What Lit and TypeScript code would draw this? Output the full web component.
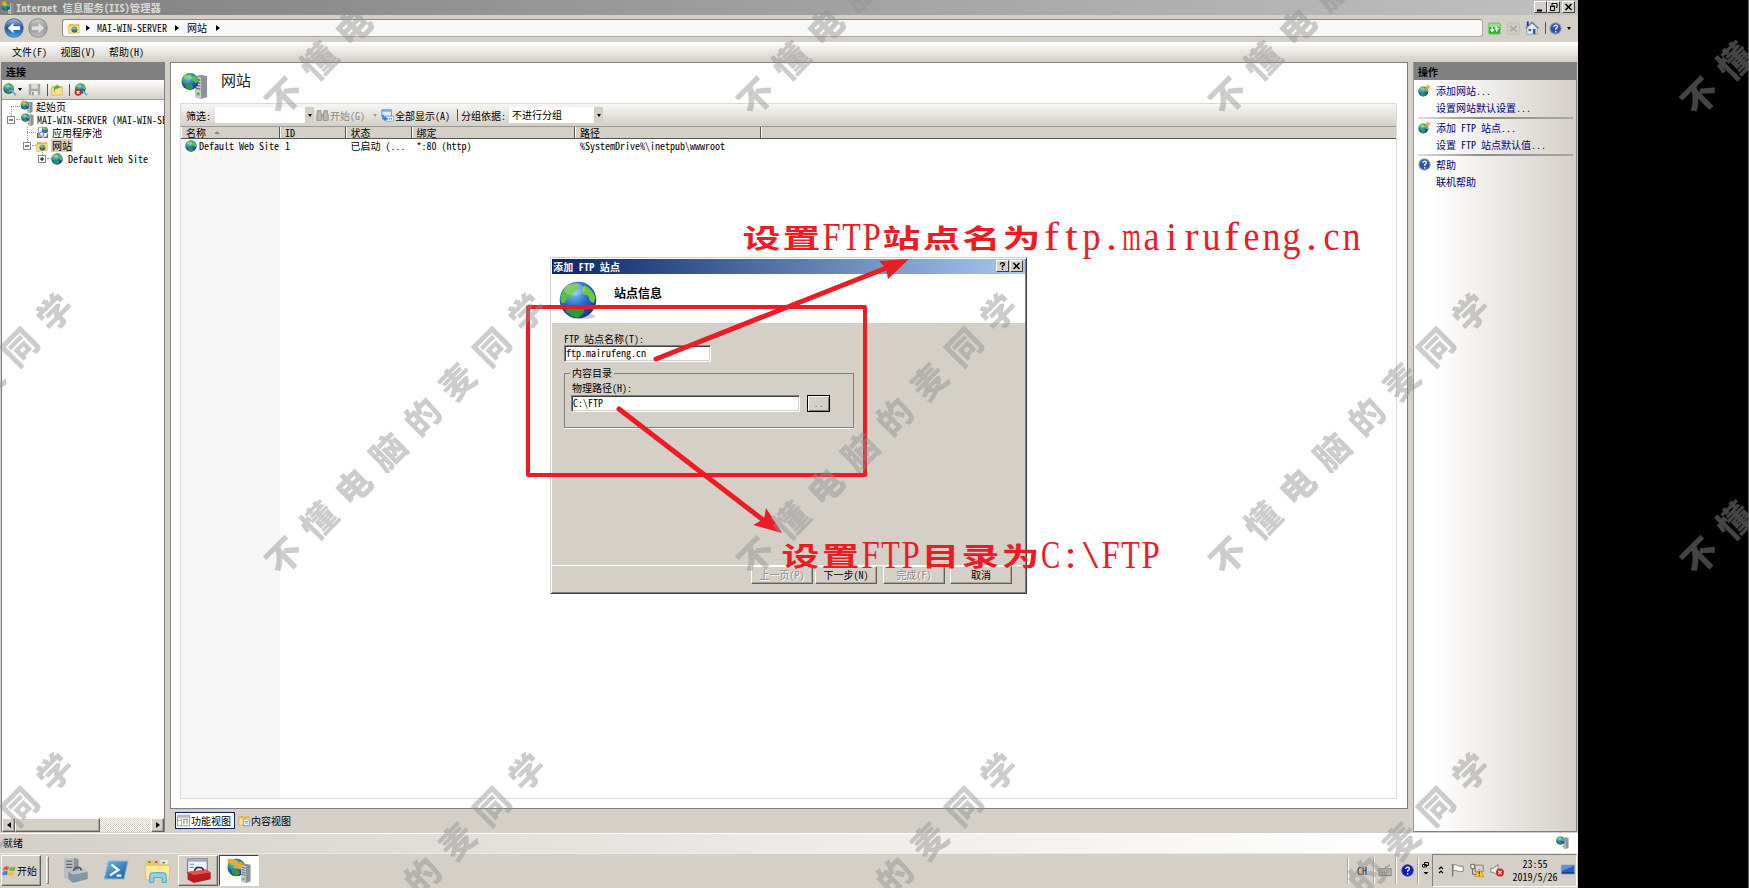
import { LitElement, html, svg, css } from "lit";
import { customElement, property } from "lit/decorators.js";

const globe = (x = 0, y = 0, s = 1) => svg`
  <g transform="translate(${x} ${y}) scale(${s})">
    <circle cx="8" cy="8" r="7.6" fill="url(#sea)"/>
    <path d="M2.2 3.4Q5 .2 8.6.8L9.4 2.4 7.4 3.4 7 5.4 4.6 6.6 4 9 1.6 8.4Q.8 5.4 2.2 3.4Z" fill="#3fb33a"/>
    <path d="M10.4 2.6 13 3Q15.4 5.6 15.2 8.6L13 9.6 11.6 7.4 9.4 6.8 9 4.4Z" fill="#58c23e"/>
    <path d="M4.4 10.4 7.4 9.6 10.4 11.2 11 13.4 8.6 15.4Q5.4 15 4.2 13Z" fill="#2f9a34"/>
    <ellipse cx="6" cy="4" rx="3.6" ry="2.2" fill="#fff" opacity=".35"/>
  </g>`;

/* Large globe of the wizard banner: mostly ocean, with lit land masses and a soft ground shadow. */
const earth = svg`
  <ellipse cx="9.6" cy="14.8" rx="5.6" ry="1.2" fill="#000" opacity=".2"/>
  <circle cx="8" cy="8" r="7.7" fill="url(#sea)"/>
  <path d="M1.4 4.6Q3.4 1.2 7 .6L9 1.4 7.6 2.4 8 3.6 6.4 4.4 5.4 6.2 3.6 7 2.6 9 1.2 9.4Q0 7 1.4 4.6Z" fill="#5fbf3c"/>
  <path d="M10.6 1.8Q14.4 3.4 15.3 7L14.6 9.4 13 8.4 12.2 6 10.4 5.6 9.8 3.6Z" fill="#6cc743"/>
  <path d="M3.4 11 5.6 10.2 8.4 10.4 10.6 12 10 14 8 15.5Q4.8 15 3 12.8Z" fill="#2f9a34"/>
  <ellipse cx="6.6" cy="3.6" rx="4.4" ry="2.6" fill="#fff" opacity=".22"/>`;

const tower = (x = 0, y = 0, s = 1) => svg`
  <g transform="translate(${x} ${y}) scale(${s})">
    <path d="M0 1 4 0 8 1V15L4 16.4 0 15Z" fill="#8d9296"/>
    <path d="M0 1 4 2V16.4L0 15Z" fill="#c9cdd0"/>
    <path d="M.5 3 3.5 3.8M.5 5 3.5 5.8M.5 7 3.5 7.8M.5 9 3.5 9.8" stroke="#5c6165" stroke-width=".8"/>
    <rect x="1" y="12" width="2" height="2" fill="#4fc13c"/>
  </g>`;

const spark = (x: number, y: number) => svg`
  <path transform="translate(${x} ${y})" d="M0-4 1-1.4 3.6-2.6 1.8 0 4 1.4 1 1.4.4 4-1 1.4-4 1.6-1.8-.2-3-2.8-.8-1.4Z" fill="#f6a723"/>`;

const folder = svg`
  <path d="M1 3.4 6 2 7.4 3.4 14.6 2.6V14.4L1 15Z" fill="#e3b54a"/>
  <path d="M1 5.4 15 4.4V14.4L1 15.2Z" fill="#fbe08a" stroke="#c8973a" stroke-width=".6"/>`;

const question = (fill: string, ring: string) => svg`
  <circle cx="8" cy="8" r="7.6" fill="${ring}"/><circle cx="8" cy="8" r="6.2" fill="${fill}"/>
  <path d="M5.8 6.2Q6 3.8 8.2 3.8 10.4 4 10.2 6 10 7.2 8.2 8.2V9.6M8.2 11V12.8" fill="none" stroke="#fff" stroke-width="1.7"/>`;

const glyphs: Record<string, unknown> = {
  globe: globe(),
  earth,
  globeTool: svg`${globe(0, 0, 0.85)}<path d="M8 10Q11 8 12 11L16 15" stroke="#7ba8cf" stroke-width="2.4" fill="none"/>`,
  globeStop: svg`${globe(1, 0, 0.85)}<path d="M11 10 16 15" stroke="#7ba8cf" stroke-width="2.4"/>
    <circle cx="5" cy="11.5" r="4.3" fill="#c8201c"/><path d="M3.2 9.7 6.8 13.3M6.8 9.7 3.2 13.3" stroke="#fff" stroke-width="1.4"/>`,
  globeNew: svg`${globe(0, 2.6, 0.82)}${spark(12, 4)}`,
  site: svg`${folder}${globe(4.4, 6, 0.52)}`,
  server: svg`${tower(8.4, 1.6, 0.88)}${globe(0, 0.4, 0.66)}`,
  start: svg`${tower(8.6, 2, 0.86)}${globe(0.6, 1.4, 0.66)}${spark(4, 3)}`,
  pool: svg`<path d="M3 1.5H11L14 4V14H3Z" fill="#eef4fb" stroke="#7f9cbd"/>${globe(7, 1, 0.48)}
    <path d="M2 8.5V14H7" stroke="#cc3b2c" stroke-width="1.6" fill="none"/><path d="M10 14H14V10" stroke="#cc3b2c" stroke-width="1.6" fill="none"/><circle cx="7" cy="10" r="2.8" fill="#dfe8f3" stroke="#3f74ad"/>`,
  back: svg`<circle cx="8" cy="8" r="7.8" fill="#5a6f92"/><circle cx="8" cy="8" r="7" fill="url(#nav)"/>
    <path d="M3 8 7.6 3.8V6.5H13V9.5H7.6V12.2Z" fill="#fff"/>`,
  forward: svg`<circle cx="8" cy="8" r="7.8" fill="#8e8e8e"/><circle cx="8" cy="8" r="7" fill="url(#dim)"/>
    <path d="M13 8 8.4 3.8V6.5H3V9.5H8.4V12.2Z" fill="#dedede"/>`,
  save: svg`<path d="M1 1H15V15H1Z" fill="#a9a9a9"/><path d="M4 1H12V7H4Z" fill="#dcdcdc"/><path d="M4 10H12V15H4Z" fill="#e8e8e8"/><path d="M5 11H7V15H5Z" fill="#8f8f8f"/>`,
  up: svg`${folder}<path d="M5 13V8.5Q5 6 8 5.6L7.6 7.4 12 3.6 7.2.4 7.6 2.6Q3.6 3.6 4 8Z" fill="#43ad34"/>`,
  refresh: svg`<rect x=".5" y="1" width="15" height="14" rx="2" fill="#2fb52d" stroke="#8bcf86"/><rect x="1" y="1.5" width="14" height="5" rx="2" fill="#8ade84"/>
    <path d="M5.2 11.4V5.4M3 9 5.2 11.6 7.4 9M10.8 12V8Q10.8 5.6 8.6 5.4M8.6 9 10.8 7.4 13.2 9" fill="none" stroke="#fff" stroke-width="1.5"/>`,
  stop: svg`<rect x=".5" y="1" width="15" height="14" rx="2" fill="#cfccc5" stroke="#bdb9b1"/><path d="M4 5 12 11.4M12 5 4 11.4" stroke="#aaa7a1" stroke-width="2"/>`,
  home: svg`<path d="M2 7.6V15H14V7.6L8 2.4Z" fill="#e9eef7" stroke="#6f83ad" stroke-width=".8"/><path d="M.6 8.4 8 1.6 15.4 8.4" fill="none" stroke="#7389b8" stroke-width="1.8"/>
    <path d="M2 .6H4.2V5L2 6.4Z" fill="#2233c0"/><path d="M9 9H12V15H9Z" fill="#3e5ca5"/><path d="M4 9H7V11.6H4Z" fill="#555f78"/>`,
  help: question("#2752b8", "#9a9a9a"),
  trayHelp: question("#1418c4", "#2c3a8c"),
  find: svg`<path d="M2 2H6V6L7 7V14H1V7ZM10 2H14V6L15 7V14H9V7Z" fill="#b9b7b2" stroke="#8c8a86"/><path d="M6 6H10V10H6Z" fill="#9c9a96"/>`,
  showAll: svg`<path d="M1 1H13V9H1Z" fill="#dfeaf8" stroke="#5d85b9"/><path d="M1 1H13V3.4H1Z" fill="#86a8d6"/>
    <path d="M6 9H15.4V15H6Z" fill="#fff" stroke="#7d9cc6"/><path d="M7.4 12H14" stroke="#4b75b5" stroke-width="2" stroke-dasharray="1.4 1"/><path d="M2.4 7V12H6M4.4 9.8 6.6 12 4.4 14.2" fill="none" stroke="#1f7cd0" stroke-width="1.8"/>`,
  features: svg`<path d="M.5 1.5H15.5V14.5H.5Z" fill="#f4f4f4" stroke="#8d8d8d"/><path d="M1 2H15V4.6H1Z" fill="#b4bac2"/>
    <path d="M5.5 5V14M1 8H5" stroke="#a8a8a8"/><path d="M7.4 6.6H13.6M7.4 8.8H9.6M11.4 8.8H13.6M7.4 11H9.6M11.4 11H13.6" stroke="#7d858e" stroke-width="1.2"/>`,
  content: svg`${folder}<path d="M7.5 6.5H12.5L15 9V15.5H7.5Z" fill="#fff" stroke="#5d85b9"/><path d="M9 10H13.5M9 12H13.5" stroke="#5d85b9"/>`,
  flagWin: svg`<path d="M1 4Q4 2 7.4 3.4L6.4 7.8Q3.4 6.6.2 8.2Z" fill="#e8542b"/><path d="M8.6 3.8Q11.6 5.2 15.4 3.4L14.2 8Q11 9.2 7.6 8Z" fill="#74b62e"/>
    <path d="M0 9.4Q3 8 6 9.2L5 13.6Q2.4 12.4-.8 14Z" fill="#3b7fd6"/><path d="M7.2 9.4Q10.4 10.8 13.8 9.2L12.6 13.8Q9.4 15 6.2 13.8Z" fill="#f4bf1f"/>`,
  manager: svg`<path d="M1 0H8L10 1V13H1Z" fill="#8c9499"/><path d="M1 0H7V13H1Z" fill="#b9c0c4"/><path d="M2 2H6M2 4H6M2 6H6" stroke="#5d666b" stroke-width=".8"/>
    <path d="M3.4 8.6 13.4 7.4 15.8 9V13.4L6.4 16 3.4 13.6Z" fill="#8496a2"/><path d="M3.4 8.6 13.4 7.4 15.8 9 6.4 10.6Z" fill="#b7c5ce"/><path d="M6.6 8.4Q7.4 5.8 9.4 6 11.6 6 11.8 8" fill="none" stroke="#4b565d"/>`,
  shell: svg`<path d="M3 2H16L13.4 14H.2Z" fill="url(#ps)" stroke="#8db9d8" stroke-width=".7"/><path d="M5 4.4 9.6 8 4 11.6M8.4 11.8H11.6" fill="none" stroke="#fff" stroke-width="1.5"/>`,
  explorer: svg`<path d="M1 1.6H6L7 3H15V14H1Z" fill="#e9c765"/><path d="M10 1.4H14.6V4H10Z" fill="#fff0b8"/><path d="M2 2.6H3.6" stroke="#2ea04a"/><path d="M6.4 2.6H8" stroke="#c8312c"/><path d="M11 3H13" stroke="#2b8fd8"/>
    <path d="M0 4.6H16L15.4 14H.6Z" fill="#fbe9a0" stroke="#e0bd58" stroke-width=".5"/><path d="M3 15.6V11Q3 9.4 4.6 9.4H12Q13.6 9.4 13.6 11V15.6H11V12.6H5.6V15.6Z" fill="#8fd0ee" stroke="#4a9cc8" stroke-width=".6"/>`,
  toolbox: svg`<path d="M1 .6H13.6V10H1Z" fill="#f3f5f8" stroke="#7b8593" stroke-width=".8"/><path d="M1 .6H13.6V2.4H1Z" fill="#9fb0c6"/><path d="M2.4 4H5M2.4 6H5" stroke="#7b8593" stroke-width=".7"/>
    <path d="M1 9 12.8 7.4 15.8 9.2V13.6L5 16 1 13.8Z" fill="#b81d1d"/><path d="M1 9 12.8 7.4 15.8 9.2 5 10.8Z" fill="#e9554e"/><path d="M5.4 8.4Q6 5.8 8.4 6 10.8 6 11.2 8" fill="none" stroke="#333"/>`,
  iis: svg`${globe(0, 0, 0.75)}${tower(9, 3.6, 0.76)}<path d="M.4.6Q5-.4 7.4 3.6L9.4 2.4 8.8 7.4 4 6 5.8 4.8Q4 2.4.4 3.4Z" fill="#f3aa1e"/>`,
  keyboard: svg`<path d="M1 6.5H15V14.5H1Z" fill="#bbb8b0" stroke="#7f7c76"/><path d="M3 9H13M3 11H13M5 13H11" stroke="#6f6c67" stroke-dasharray="1.2 .8"/><path d="M8 6Q8 3.6 11 4 13 4 13 1.6" fill="none" stroke="#7f7c76"/>`,
  flag: svg`<path d="M3 1V15.4" stroke="#777" stroke-width="1.6"/><path d="M3.6 2.4Q6 1 8.4 2.8 11 4.4 15 3.6V9.6Q11 10.6 8.4 9 6 7.6 3.6 9Z" fill="#fff" stroke="#777"/>`,
  network: svg`<path d="M1 1.5H5V6.5H1Z" fill="#f1f1f1" stroke="#555"/><path d="M6 2.5H15V10H6Z" fill="#d8d8d8" stroke="#777"/><path d="M3 7V13H9" stroke="#555" fill="none"/><path d="M10.6 6.6 16 15.6H5.2Z" fill="#f8cf1e" stroke="#a98408" stroke-width=".6"/><path d="M10.6 9.4V12.6M10.6 13.4V14.6" stroke="#222" stroke-width="1.3"/>`,
  sound: svg`<path d="M1 6H4L9 1.6V14.4L4 10.6H1Z" fill="#ececec" stroke="#777"/><circle cx="11.4" cy="10.8" r="4.6" fill="#e2271f"/><path d="M9.6 9 13.2 12.6M13.2 9 9.6 12.6" stroke="#fff" stroke-width="1.4"/>`,
  desktop: svg`<path d="M.5 2.5H15.5V12.5H.5Z" fill="#2b62bb" stroke="#7c9ed6"/><path d="M1 3H15L1 9Z" fill="#5d93de"/><path d="M1 11.2H15" stroke="#173a78" stroke-width="1.6"/>`,
};

@customElement("ui-icon")
export class UiIcon extends LitElement {
  @property() name = "globe";
  @property({ type: Number }) size = 13;
  static styles = css`
    :host { display: block; flex: none; line-height: 0; }
    svg { display: block; overflow: visible; }
  `;
  render() {
    return html`<svg width=${this.size} height=${this.size} viewBox="0 0 16 16">
      <defs>
        <radialGradient id="sea" cx=".4" cy=".3" r=".8"><stop offset="0" stop-color="#7cc3f5"/><stop offset=".5" stop-color="#2467c4"/><stop offset="1" stop-color="#0c2c74"/></radialGradient>
        <linearGradient id="nav" x2="0" y2="1"><stop offset="0" stop-color="#9dbbe6"/><stop offset=".5" stop-color="#1d4a9c"/><stop offset="1" stop-color="#35b2ee"/></linearGradient>
        <linearGradient id="dim" x2="0" y2="1"><stop offset="0" stop-color="#c9c9c9"/><stop offset=".5" stop-color="#9b9b9b"/><stop offset="1" stop-color="#bdbdbd"/></linearGradient>
        <linearGradient id="ps" x2="1" y2="1"><stop offset="0" stop-color="#6cb9e8"/><stop offset="1" stop-color="#15599f"/></linearGradient>
      </defs>${glyphs[this.name]}</svg>`;
  }
}

/* Horizontal squeeze that fits a serif glyph into a 20px half-width cell. */
const squeeze: Record<string, number> = { F: 0.82, T: 0.76, P: 0.82, C: 0.72, m: 0.6, ".": 1.1, ":": 1.1, i: 1, f: 1.15, t: 1.15, r: 1.05, "\\": 1.4 };

@customElement("note-layer")
export class NoteLayer extends LitElement {
  static styles = css`
    :host { display: block; }
    svg { display: block; }
    .han { font: 700 38px "Noto Sans CJK SC", sans-serif; fill: #ed1c24; text-anchor: middle; }
    .latin { font: 40px "Liberation Serif", serif; fill: #ed1c24; text-anchor: middle; }
    .mark { font: 900 35px "Noto Sans CJK SC", sans-serif; fill: rgb(146, 146, 146); text-anchor: middle; }
  `;
  private line(text: string, left: number, base: number) {
    let x = left;
    return [...text].map((ch) => {
      const wide = ch.charCodeAt(0) > 255;
      const w = wide ? 40 : 20;
      const cx = x + w / 2;
      x += w;
      return wide
        ? svg`<text class="han" transform="translate(${cx} ${base - 2}) scale(1 .7)">${ch}</text>`
        : svg`<text class="latin" transform="translate(${cx} ${base}) scale(${squeeze[ch] ?? 0.9} 1)">${ch}</text>`;
    });
  }
  private marks() {
    const out: unknown[] = [];
    for (let row = 0; row < 3; row++)
      for (let col = -1; col < 4; col++)
        [..."不懂电脑的麦同学"].forEach((ch, i) => {
          const x = 284 + col * 472 + i * 34.7;
          const y = 96.5 + row * 459.5 - i * 34.8;
          if (x < -22 || x > 1770 || y < -22 || y > 910) return;
          out.push(svg`<text class="mark" transform="translate(${x} ${y}) rotate(-45)" y="13">${ch}</text>`);
        });
    return out;
  }
  render() {
    return html`<svg width="1749" height="888" viewBox="0 0 1749 888">
      <g stroke="#ed1c24" fill="none">
        <rect x="528" y="307" width="337" height="168" stroke-width="4" stroke-linejoin="round"/>
        <path d="M656 359 890 266.5M619 409 767 523" stroke-width="5" stroke-linecap="round"/>
      </g>
      <path d="M909 259 879 261 886 268 888 279ZM782 533 766 508 764 519 753 525Z" fill="#ed1c24"/>
      ${this.line("设置FTP站点名为ftp.mairufeng.cn", 741.5, 249.5)}
      ${this.line("设置FTP目录为C:\\FTP", 780.5, 568)}
      <g opacity=".467">${this.marks()}</g>
    </svg>`;
  }
}

@customElement("app-root")
export class AppRoot extends LitElement {
  static styles = css`
    * { box-sizing: border-box; }
    :host {
      display: block; position: relative; width: 1749px; height: 888px; overflow: hidden;
      background: #000; box-sizing: border-box; border-right: 1px solid #666; color: #000; white-space: nowrap;
      font: 10px/13px "Noto Sans Mono CJK SC", "Noto Sans CJK SC", sans-serif;
    }
    .row { display: flex; align-items: center; }
    .desk { width: 1578px; height: 888px; background: #d4d0c8; display: flex; flex-direction: column; }
    .caption { height: 15px; padding: 0 3px 1px 1px; gap: 2px; background: linear-gradient(90deg, #808080, #c0c0c0); color: #dcd9d2; flex: none; }
    .caption .name { flex: 1; font-size: 10.35px; font-weight: 700; }
    .ctl { width: 13px; height: 12px; background: #d4d0c8; border: 1px solid; border-color: #fff #404040 #404040 #fff; display: block; flex: none; }
    .ctl svg { display: block; }
    .nav { height: 27px; flex: none; padding: 0 7px 1px 4px; }
    .addr { margin-left: 14px; width: 1421px; height: 18px; border: 1px solid #8a8883; border-right-color: #aaa; border-bottom-color: #aaa; border-radius: 3px; background: #f8f8f6; padding: 0 0 1px 5px; }
    .tri { width: 0; height: 0; border: 3.5px solid transparent; border-left: 4px solid #000; border-right: 0; flex: none; }
    .down { width: 0; height: 0; border: 2.5px solid transparent; border-top: 3px solid #000; border-bottom: 0; flex: none; }
    .down.off { border-top-color: #999; }
    .menu { height: 19px; flex: none; padding: 0 0 1px 12px; gap: 13.5px; background: linear-gradient(#fff, #d4d0c8); }
    .body { display: flex; height: 772px; flex: none; padding: 1px 1px 0 1px; }
    .left { width: 164px; height: 770px; border: 1px solid #808080; border-bottom: 0; background: #fff; display: flex; flex-direction: column; }
    .head { height: 17px; flex: none; background: #808080; font-weight: 700; padding-left: 4px; }
    .tools { height: 20px; flex: none; background: linear-gradient(#fff, #d4d0c8); border-bottom: 1px solid #999; padding-left: 1px; }
    .bar { width: 1px; height: 12px; background: #555; flex: none; }
    .tree { flex: 1; overflow: hidden;
      background:
        repeating-linear-gradient(#999 0 1px, #fff 1px 2px) 9px 7px / 1px 12px no-repeat,
        repeating-linear-gradient(#999 0 1px, #fff 1px 2px) 25px 27px / 1px 18px no-repeat,
        repeating-linear-gradient(#999 0 1px, #fff 1px 2px) 40px 52px / 1px 6px no-repeat; }
    .tree .row { height: 13.1px; }
    .tree .lab { margin-left: 3px; }
    .sel { background: #d4d0c8; padding: 0 1px; margin-left: 3px; }
    .dots { height: 0; border-top: 1px dotted #999; flex: none; }
    .box { width: 8px; height: 8px; border: 1px solid #888; background: #fff; flex: none; display: grid; place-items: center; }
    .box svg { display: block; }
    .lv1 { margin-left: 5px; } .lv2 { margin-left: 21px; } .lv3 { margin-left: 36px; }
    .hscroll { height: 14px; display: flex; flex: none; background: repeating-conic-gradient(#fff 0 25%, #d4d0c8 0 50%) 0 0 / 2px 2px; justify-content: space-between; }
    .raised { background: #d4d0c8; border: 1px solid; border-color: #fff #606060 #606060 #fff; box-shadow: inset -1px -1px #aaa69e; }
    .hscroll .raised { width: 13px; display: grid; place-items: center; }
    .hscroll .thumb { width: 85px; margin-right: auto; }
    .flip { transform: scaleX(-1); }
    .mid { width: 1238px; margin-left: 5px; display: flex; flex-direction: column; }
    .page { height: 747px; flex: none; border: 1px solid #808080; background: #fff; padding: 0 10px; }
    .title { height: 40px; align-items: flex-start; font-size: 15px; line-height: 19px; color: #222; gap: 13px; }
    .title ui-icon { margin-top: 9px; }
    .title span { margin-top: 7px; }
    .list { width: 1217px; height: 696px; margin-left: -1px; border: 1px solid #dcdad2; display: flex; flex-direction: column; }
    .filter { height: 22px; flex: none; background: linear-gradient(#f7f6f4, #d4d0c8); padding-left: 5px; }
    .combo { height: 16px; background: #fff; display: flex; justify-content: space-between; line-height: 16px; padding-left: 2px; }
    .combo .btn { width: 9px; background: #d4d0c8; display: grid; place-items: center; }
    .off { color: #8a8a86; }
    .cols { display: grid; grid-template-columns: 99px 65.5px 66px 163.5px 186px 1fr; flex: none; }
    .cols.th { height: 13px; background: #d4d0c8; border-top: 1px solid #999; border-bottom: 1px solid #555; }
    .cols.th > div { border-right: 1px solid #555; border-left: 1px solid #fff; padding-left: 4px; line-height: 11px; height: 11px; }
    .cols.th > div:last-child { border-right: 0; }
    .cols.th .arr { display: inline-block; margin: 0 0 3px 8px; border: 3.5px solid transparent; border-bottom: 3.5px solid #888; border-top: 0; }
    .rows { flex: 1; background: linear-gradient(90deg, #f6f6f6 99px, #fff 99px); }
    .rows .cols { height: 13px; align-items: center; }
    .rows .cols > div { padding-left: 5px; }
    .rows .cols > .row { gap: 2px; padding-left: 4px; }
    .tabs { height: 17px; margin: 3px 0 0 5px; display: flex; gap: 1px; }
    .tab { height: 17px; gap: 1px; padding: 0 1px 1px; border: 1px solid transparent; }
    .tab.on { border-color: #0a246a; background: #fff; width: 60px; }
    .right { width: 165px; height: 770px; margin-left: 5px; border: 1px solid #808080; border-left-color: #999; background: linear-gradient(90deg, #fff 12%, #d4d0c8); color: #000080; }
    .right .head { color: #000; }
    .acts { padding: 2px 3px 0 4px; }
    .acts .row { height: 17px; gap: 5px; }
    .acts .row.sub { padding-left: 18px; }
    .acts hr { height: 2px; margin: 1px 0 0; border: 0; background: linear-gradient(90deg, #ddd, #8f8c86 40%, #aaa7a0); }
    .status { height: 20px; flex: none; border-top: 1px solid #fff; background: linear-gradient(90deg, #d4d0c8, #fff 90%); justify-content: space-between; padding: 0 9px 2px 3px; }
    .task { height: 35px; flex: none; border-top: 1px solid #eceae6; padding: 0 1px 2px 1px; }
    .task > .raised { height: 31px; }
    .startb { width: 40px; gap: 1px; padding-left: 1px; }
    .grip { width: 3px; height: 28px; border: 1px solid; border-color: #fff #808080 #808080 #fff; margin-left: 5px; flex: none; }
    .app { display: grid; place-items: center; width: 40px; flex: none; }
    .on2 { background: #fff; border: 1px solid; border-color: #404040 #fff #fff #404040; height: 31px; margin-left: 1px; }
    .vline { width: 2px; height: 27px; border-left: 1px solid #aaa69e; border-right: 1px solid #fff; flex: none; }
    .tray { width: 145px; height: 33px; border: 1px solid; border-color: #808080 #fff #fff #808080; padding-left: 5px; flex: none; }
    .clock { text-align: center; width: 48px; margin-left: 7px; margin-right: 2px; flex: none; }
    .dialog { position: absolute; left: 550px; top: 257px; width: 477px; height: 337px; background: #d4d0c8; border: 1px solid; border-color: #d4d0c8 #404040 #404040 #d4d0c8; box-shadow: inset 1px 1px #fff, inset -1px -1px #808080; padding: 1px; display: flex; flex-direction: column; }
    .dcap { height: 15px; flex: none; background: linear-gradient(90deg, #0a246a, #a6caf0); color: #fff; font-weight: 700; padding: 0 2px 1px 1px; gap: 1px; letter-spacing: .25px; }
    .dcap .dname { flex: 1; }
    .banner { height: 49px; flex: none; background: #fff; gap: 17px; padding-left: 7px; font-size: 12px; font-weight: 700; align-items: flex-start; }
    .banner ui-icon { margin-top: 7px; }
    .banner span { margin-top: 12px; }
    .form { flex: 1; padding: 9px 0 0 12px; border-bottom: 1px solid #fff; }
    .input { height: 17px; background: #fff; border: 1px solid; border-color: #808080 #fff #fff #808080; box-shadow: inset 1px 1px #404040, inset -1px -1px #d4d0c8; padding-left: 1px; line-height: 14px; }
    fieldset { margin: 5px 0 0; padding: 2px 0 0 5px; width: 290px; height: 61px; border: 1px solid #808080; box-shadow: 0 1px #fff; }
    legend { margin: 0; padding: 0 2px; line-height: 12px; }
    .pair { display: flex; gap: 7px; margin-top: 1px; }
    .browse { width: 23px; height: 17px; background: #d4d0c8; border: 1px solid #000; box-shadow: inset 1px 1px #fff, inset -1px -1px #808080; text-align: center; color: #777; line-height: 13px; }
    .btns { display: flex; justify-content: flex-end; height: 26px; flex: none; padding-right: 13px; }
    .btns .raised { width: 62px; height: 18px; text-align: center; line-height: 16px; }
    .btns .dis { color: #8d8a84; text-shadow: 1px 1px #fff; }
    note-layer { position: absolute; left: 0; top: 0; }
    .s1 { margin-left: 1px; } .s2 { margin-left: 2px; } .s3 { margin-left: 3px; } .s4 { margin-left: 4px; } .s5 { margin-left: 5px; } .s6 { margin-left: 6px; } .s7 { margin-left: 7px; } .s8 { margin-left: 8px; } .s9 { margin-left: 9px; } .s25 { margin-left: 25px; }
    .w4 { width: 4px; } .w9 { width: 9px; } .w91 { width: 99px; } .w84 { width: 94px; } .iw1 { width: 147px; } .iw2 { width: 229px; }
    .push { margin-left: auto; }
  `;

  private ctl(kind: string) {
    const d: Record<string, unknown> = {
      min: svg`<path d="M2 8.5H7" stroke-width="2"/>`,
      restore: svg`<path d="M4 1.5H9V5.5H8M4 1V3M2.5 4H6.5V8.5H2.5ZM2 4.5H7" stroke-width="1"/>`,
      close: svg`<path d="M2.5 2 8.5 8M8.5 2 2.5 8" stroke-width="1.5"/>`,
      help: svg`<path d="M3.4 3.4Q3.4 1.6 5.5 1.6 7.6 1.8 7.4 3.4 7.2 4.4 5.5 5V6.4M5.5 7.4V9" stroke-width="1.4"/>`,
    };
    return html`<span class="ctl"><svg width="11" height="10" fill="none" stroke="#000">${d[kind]}</svg></span>`;
  }

  private box(open: boolean, level: string) {
    return html`<span class="box ${level}"><svg width="6" height="6"><path d="${open ? "M1 3H5" : "M1 3H5M3 1V5"}" stroke="#000"/></svg></span>`;
  }

  render() {
    return html`
      <div class="desk">
        <div class="caption row">
          <ui-icon name="start" size="13"></ui-icon><span class="name">Internet 信息服务(IIS)管理器</span>
          <div class="row">${this.ctl("min")}${this.ctl("restore")}<span class="s2">${this.ctl("close")}</span></div>
        </div>
        <div class="nav row">
          <ui-icon name="back" size="20"></ui-icon><ui-icon class="s4" name="forward" size="20"></ui-icon>
          <div class="addr row">
            <ui-icon name="site" size="12"></ui-icon><i class="tri s6"></i><span class="s7">MAI-WIN-SERVER</span>
            <i class="tri s8"></i><span class="s8">网站</span><i class="tri s9"></i>
          </div>
          <ui-icon class="s5" name="refresh" size="13"></ui-icon><ui-icon class="s6" name="stop" size="13"></ui-icon>
          <ui-icon class="s5" name="home" size="14"></ui-icon><i class="bar s6"></i><ui-icon class="s3" name="help" size="13"></ui-icon><i class="down s5"></i>
        </div>
        <div class="menu row"><span>文件(F)</span><span>视图(V)</span><span>帮助(H)</span></div>
        <div class="body">
          <div class="left">
            <div class="head row">连接</div>
            <div class="tools row">
              <ui-icon name="globeTool"></ui-icon><i class="down s2"></i><ui-icon class="s6" name="save"></ui-icon>
              <i class="bar s6"></i><ui-icon class="s3" name="up" size="12"></ui-icon><i class="bar s6"></i><ui-icon class="s4" name="globeStop"></ui-icon>
            </div>
            <div class="tree">
              <div class="row"><i class="dots w9 s9"></i><ui-icon name="start"></ui-icon><span class="lab">起始页</span></div>
              <div class="row">${this.box(true, "lv1")}<i class="dots w4 s1"></i><ui-icon class="s1" name="server"></ui-icon><span class="s3">MAI-WIN-SERVER (MAI-WIN-SE</span></div>
              <div class="row"><i class="dots w9 s25"></i><ui-icon name="pool"></ui-icon><span class="s3">应用程序池</span></div>
              <div class="row">${this.box(true, "lv2")}<i class="dots w4 s1"></i><ui-icon name="site" size="12"></ui-icon><span class="sel">网站</span></div>
              <div class="row">${this.box(false, "lv3")}<i class="dots w4 s1"></i><ui-icon name="globe" size="12"></ui-icon><span class="s5">Default Web Site</span></div>
            </div>
            <div class="hscroll"><span class="raised"><i class="tri flip"></i></span><span class="raised thumb"></span><span class="raised"><i class="tri"></i></span></div>
          </div>
          <div class="mid">
            <div class="page">
              <div class="title row"><ui-icon name="server" size="27"></ui-icon><span>网站</span></div>
              <div class="list">
                <div class="filter row">
                  <span>筛选:</span><div class="combo w91 s4"><span></span><span class="btn"><i class="down"></i></span></div>
                  <ui-icon class="s2" name="find"></ui-icon><span class="off s1">开始(G)</span><i class="down off s8"></i>
                  <ui-icon class="s4" name="showAll" size="13"></ui-icon><span class="s1">全部显示(A)</span>
                  <i class="bar s7"></i><span class="s3">分组依据:</span>
                  <div class="combo w84 s3"><span class="s1">不进行分组</span><span class="btn"><i class="down"></i></span></div>
                </div>
                <div class="cols th"><div>名称<i class="arr"></i></div><div>ID</div><div>状态</div><div>绑定</div><div>路径</div><div></div></div>
                <div class="rows">
                  <div class="cols"><div class="row"><ui-icon name="globe" size="12"></ui-icon><span>Default Web Site</span></div><div>1</div><div>已启动 (...</div><div>*:80 (http)</div><div>%SystemDrive%\\inetpub\\wwwroot</div></div>
                </div>
              </div>
            </div>
            <div class="tabs">
              <div class="tab on row"><ui-icon name="features"></ui-icon><span>功能视图</span></div>
              <div class="tab row"><ui-icon name="content" size="12"></ui-icon><span>内容视图</span></div>
            </div>
          </div>
          <div class="right">
            <div class="head row">操作</div>
            <div class="acts">
              <div class="row"><ui-icon name="globeNew"></ui-icon><span>添加网站...</span></div>
              <div class="row sub">设置网站默认设置...</div><hr>
              <div class="row"><ui-icon name="globeNew"></ui-icon><span>添加 FTP 站点...</span></div>
              <div class="row sub">设置 FTP 站点默认值...</div><hr>
              <div class="row"><ui-icon name="help"></ui-icon><span>帮助</span></div>
              <div class="row sub">联机帮助</div>
            </div>
          </div>
        </div>
        <div class="status row"><span>就绪</span><ui-icon name="server"></ui-icon></div>
        <div class="task row">
          <div class="raised row startb"><ui-icon name="flagWin"></ui-icon><span>开始</span></div>
          <i class="grip"></i>
          <div class="app s6"><ui-icon name="manager" size="25"></ui-icon></div>
          <div class="app s1"><ui-icon name="shell" size="24"></ui-icon></div>
          <div class="app s1"><ui-icon name="explorer" size="25"></ui-icon></div>
          <div class="app raised s1"><ui-icon name="toolbox" size="25"></ui-icon></div>
          <div class="app on2"><ui-icon name="iis" size="25"></ui-icon></div>
          <i class="vline push"></i><span class="s8">CH</span><i class="vline s6"></i>
          <ui-icon class="s3" name="keyboard" size="14"></ui-icon><i class="vline s3"></i><ui-icon class="s4" name="trayHelp" size="13"></ui-icon><i class="vline s3"></i>
          <svg class="s3" width="8" height="18" fill="none" stroke="#000"><path d="M2.5 1.5H6.5V4.5H2.5ZM.5 3.5H4.5V6H.5Z"/><path d="M1.5 11H6.5L4 13.6Z" fill="#000" stroke="none"/></svg>
          <div class="tray row s2">
            <svg width="6" height="10" fill="none" stroke="#000"><path d="M1 4 3 2 5 4M1 8 3 6 5 8" stroke-width="1.2"/></svg>
            <ui-icon class="s6" name="flag" size="14"></ui-icon><ui-icon class="s6" name="network" size="14"></ui-icon><ui-icon class="s6" name="sound" size="14"></ui-icon>
            <span class="clock">23:55<br>2019/5/26</span><ui-icon name="desktop" size="14"></ui-icon>
          </div>
        </div>
      </div>
      <div class="dialog">
        <div class="dcap row"><span class="dname">添加 FTP 站点</span>${this.ctl("help")}${this.ctl("close")}</div>
        <div class="banner row"><ui-icon name="earth" size="38"></ui-icon><span>站点信息</span></div>
        <div class="form">
          <div>FTP 站点名称(T):</div>
          <div class="input iw1">ftp.mairufeng.cn</div>
          <fieldset><legend>内容目录</legend>
            <div class="s2">物理路径(H):</div>
            <div class="pair s1"><div class="input iw2">C:\\FTP</div><div class="browse">..</div></div>
          </fieldset>
        </div>
        <div class="btns"><span class="raised dis">上一页(P)</span><span class="raised s2">下一步(N)</span><span class="raised dis s6">完成(F)</span><span class="raised s5">取消</span></div>
      </div>
      <note-layer></note-layer>`;
  }
}
